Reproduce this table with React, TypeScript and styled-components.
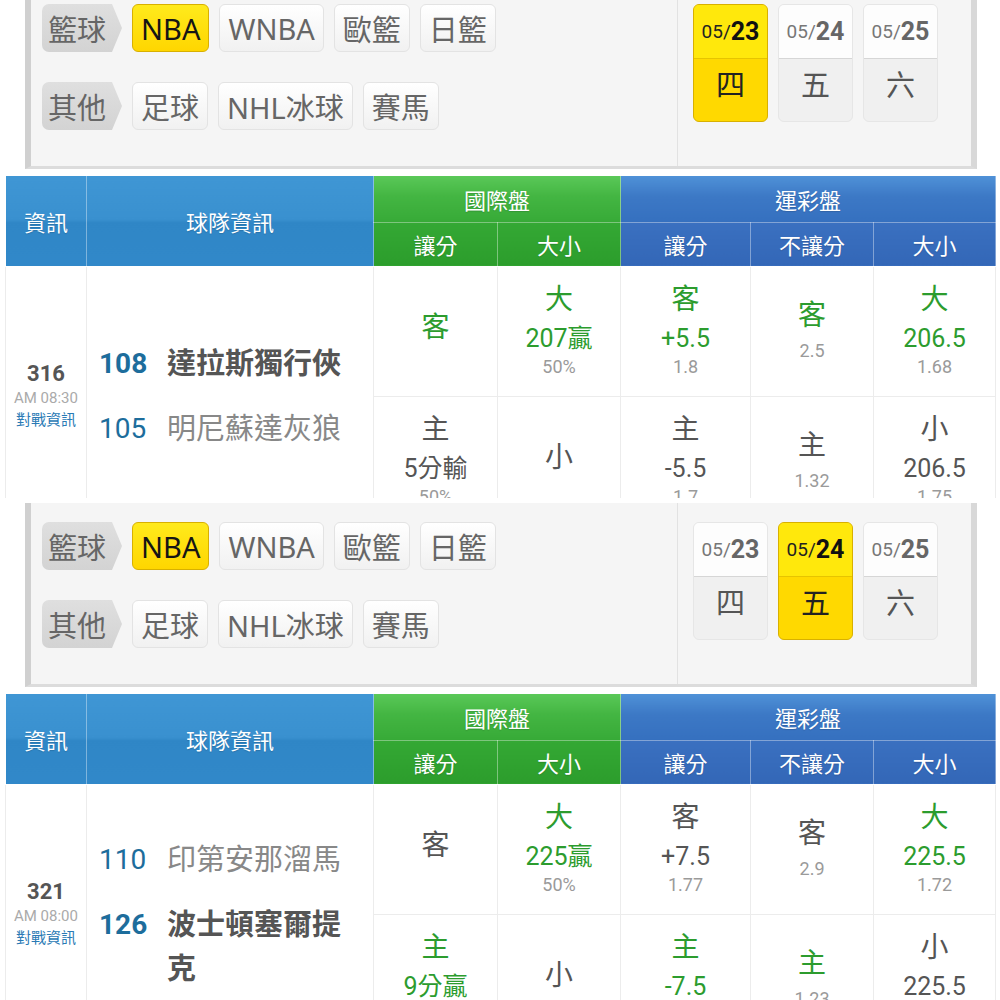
import styled, { createGlobalStyle } from "styled-components";

type Tone = "win" | "plain";
type Line = { text: string; kind: "mark" | "value" | "odds"; tone?: Tone };
type Team = { no: string; name: string; strong: boolean };
type Game = {
  id: string;
  time: string;
  teams: [Team, Team];
  rows: [Line[][], Line[][]];
};

const mk = (text: string, tone: Tone = "plain"): Line => ({ text, kind: "mark", tone });
const val = (text: string, tone: Tone = "plain"): Line => ({ text, kind: "value", tone });
const odd = (text: string): Line => ({ text, kind: "odds" });

const game316: Game = {
  id: "316",
  time: "AM 08:30",
  teams: [
    { no: "108", name: "達拉斯獨行俠", strong: true },
    { no: "105", name: "明尼蘇達灰狼", strong: false },
  ],
  rows: [
    [
      [mk("客", "win")],
      [mk("大", "win"), val("207贏", "win"), odd("50%")],
      [mk("客", "win"), val("+5.5", "win"), odd("1.8")],
      [mk("客", "win"), odd("2.5")],
      [mk("大", "win"), val("206.5", "win"), odd("1.68")],
    ],
    [
      [mk("主"), val("5分輸"), odd("50%")],
      [mk("小")],
      [mk("主"), val("-5.5"), odd("1.7")],
      [mk("主"), odd("1.32")],
      [mk("小"), val("206.5"), odd("1.75")],
    ],
  ],
};

const game321: Game = {
  id: "321",
  time: "AM 08:00",
  teams: [
    { no: "110", name: "印第安那溜馬", strong: false },
    { no: "126", name: "波士頓塞爾提克", strong: true },
  ],
  rows: [
    [
      [mk("客")],
      [mk("大", "win"), val("225贏", "win"), odd("50%")],
      [mk("客"), val("+7.5"), odd("1.77")],
      [mk("客"), odd("2.9")],
      [mk("大", "win"), val("225.5", "win"), odd("1.72")],
    ],
    [
      [mk("主", "win"), val("9分贏", "win"), odd("50%")],
      [mk("小")],
      [mk("主", "win"), val("-7.5", "win"), odd("1.73")],
      [mk("主", "win"), odd("1.23")],
      [mk("小"), val("225.5"), odd("1.72")],
    ],
  ],
};

const basketball = ["NBA", "WNBA", "歐籃", "日籃"];
const others = ["足球", "NHL冰球", "賽馬"];
const dates = [
  { day: "23", week: "四" },
  { day: "24", week: "五" },
  { day: "25", week: "六" },
];

const GlobalStyle = createGlobalStyle`
  * { box-sizing: border-box; }
  body {
    margin: 0;
    background: #fff;
    font-family: Roboto, "Noto Sans CJK TC", sans-serif;
  }
`;

const Page = styled.div`
  width: 1000px;
  display: flex;
  flex-direction: column;
  gap: 2px;
`;

const Screen = styled.div<{ $height: number }>`
  height: ${(p) => p.$height}px;
  overflow: hidden;
  background: #fff;
`;

const ScreenContent = styled.div<{ $scroll: number }>`
  margin-top: -${(p) => p.$scroll}px;
  padding-top: 3px;
`;

const FilterBox = styled.div`
  display: flex;
  height: 184px;
  margin: 0 23px 0 25px;
  background: #f5f5f5;
  border-left: 6px solid #d0d0d0;
  border-right: 6px solid #d8d8d8;
  border-bottom: 3px solid #dcdcdc;
`;

const SportArea = styled.div`
  width: 647px;
  display: flex;
  flex-direction: column;
  gap: 30px;
  padding: 19px 0 0 11px;
  border-right: 1px solid #e2e2e2;
`;

const SportRow = styled.div`
  display: flex;
  gap: 10px;
  align-items: center;
`;

const SportTag = styled.div`
  width: 80px;
  height: 48px;
  display: flex;
  align-items: center;
  padding-left: 6px;
  font-size: 29px;
  color: #666;
  background: linear-gradient(#dfdfdf, #d3d3d3);
  border-radius: 7px 0 0 7px;
  clip-path: polygon(0 0, 70px 0, 80px 50%, 70px 100%, 0 100%);
`;

const SportButton = styled.div<{ $active?: boolean }>`
  height: 48px;
  padding: 0 8px;
  display: flex;
  align-items: center;
  font-family: "Noto Sans", "Noto Sans CJK TC", sans-serif;
  font-size: 29px;
  border-radius: 6px;
  border: 1px solid ${(p) => (p.$active ? "#d8b000" : "#e3e3e3")};
  background: ${(p) =>
    p.$active ? "linear-gradient(#ffea1c, #ffd600)" : "linear-gradient(#ffffff, #f1f1f1)"};
  color: ${(p) => (p.$active ? "#151515" : "#666")};
`;

const DateArea = styled.div`
  display: flex;
  gap: 10px;
  padding: 19px 0 0 15px;
`;

const DateCard = styled.div<{ $active?: boolean }>`
  width: 75px;
  height: 118px;
  display: flex;
  flex-direction: column;
  border-radius: 6px;
  overflow: hidden;
  border: 1px solid ${(p) => (p.$active ? "#d8b000" : "#e6e6e6")};
  background: ${(p) => (p.$active ? "#ffd900" : "#f0f0f0")};
`;

const DateTop = styled.div<{ $active?: boolean }>`
  height: 54px;
  padding: 0 9px;
  display: flex;
  align-items: center;
  justify-content: center;
  background: ${(p) => (p.$active ? "#ffe80c" : "#fdfdfd")};
  border-bottom: 1px solid ${(p) => (p.$active ? "#e6c400" : "#d6d6d6")};
  color: ${(p) => (p.$active ? "#222" : "#777")};
  white-space: nowrap;
`;

const DateMonth = styled.span`
  font-size: 19px;
`;

const DateDay = styled.span<{ $active?: boolean }>`
  font-size: 25px;
  font-weight: 700;
  color: ${(p) => (p.$active ? "#111" : "#666")};
`;

const WeekDay = styled.div<{ $active?: boolean }>`
  flex: 1;
  display: flex;
  align-items: center;
  justify-content: center;
  padding-bottom: 14px;
  font-size: 29px;
  color: ${(p) => (p.$active ? "#222" : "#555")};
`;

const Board = styled.table`
  width: 990px;
  margin: 7px 5px 0;
  border-collapse: collapse;
  table-layout: fixed;
`;

type HeadTone = "info" | "intl" | "intlSub" | "lot" | "lotSub";

const headBg: Record<HeadTone, string> = {
  info: "linear-gradient(#3f96d4 0%, #3990cf 48%, #2f86c6 52%, #3188c9 100%)",
  intl: "linear-gradient(#5ac858 0%, #43b542 45%, #37aa37 100%)",
  intlSub: "linear-gradient(#34a834, #2c9d2c)",
  lot: "linear-gradient(#4f91d7 0%, #3c78c5 45%, #3570bf 100%)",
  lotSub: "linear-gradient(#3a70c0, #3367b7)",
};

const Head = styled.th<{ $tone: HeadTone; $h?: number }>`
  height: ${(p) => p.$h ?? 44}px;
  padding: 0;
  font-size: 22px;
  font-weight: 400;
  color: #fff;
  text-shadow: 0 1px 1px rgba(0, 0, 0, 0.15);
  background: ${(p) => headBg[p.$tone]};
  border: 1px solid rgba(255, 255, 255, 0.38);
  border-top: none;
`;

const Cell = styled.td`
  padding: 0;
  height: 130px;
  vertical-align: middle;
  border: 1px solid #ececec;
`;

const InfoStack = styled.div`
  display: flex;
  flex-direction: column;
  align-items: center;
`;

const GameNo = styled.div`
  font-size: 22px;
  font-weight: 700;
  line-height: 26px;
  color: #555;
`;

const GameTime = styled.div`
  font-size: 15px;
  line-height: 22px;
  color: #aaa;
`;

const VsLink = styled.div`
  font-size: 15px;
  line-height: 22px;
  color: #2a7ab5;
`;

const TeamStack = styled.div`
  display: flex;
  flex-direction: column;
  gap: 21px;
  padding-left: 12px;
`;

const TeamLine = styled.div`
  display: flex;
  align-items: flex-start;
  line-height: 44px;
`;

const TeamNo = styled.span<{ $strong: boolean }>`
  width: 57px;
  margin-right: 11px;
  font-size: 28px;
  font-weight: ${(p) => (p.$strong ? 700 : 400)};
  color: #1d6d9c;
`;

const TeamName = styled.span<{ $strong: boolean }>`
  width: 190px;
  font-size: 29px;
  font-weight: ${(p) => (p.$strong ? 700 : 400)};
  color: ${(p) => (p.$strong ? "#555" : "#888")};
`;

const OddsStack = styled.div`
  display: flex;
  flex-direction: column;
  align-items: center;
  padding-bottom: 6px;
`;

const lineStyle = {
  mark: "font-size: 28px; line-height: 46px;",
  value: "font-size: 25px; line-height: 32px;",
  odds: "font-size: 18px; line-height: 24px;",
};

const OddsLine = styled.div<{ $kind: Line["kind"]; $tone?: Tone }>`
  ${(p) => lineStyle[p.$kind]}
  color: ${(p) => (p.$kind === "odds" ? "#9a9a9a" : p.$tone === "win" ? "#2c9c2e" : "#555")};
`;

const OddsCell = ({ lines }: { lines: Line[] }) => (
  <Cell>
    <OddsStack>
      {lines.map((l, i) => (
        <OddsLine key={i} $kind={l.kind} $tone={l.tone}>
          {l.text}
        </OddsLine>
      ))}
    </OddsStack>
  </Cell>
);

const Filters = ({ day }: { day: number }) => (
  <FilterBox>
    <SportArea>
      <SportRow>
        <SportTag>籃球</SportTag>
        {basketball.map((s, i) => (
          <SportButton key={s} $active={i === 0}>
            {s}
          </SportButton>
        ))}
      </SportRow>
      <SportRow>
        <SportTag>其他</SportTag>
        {others.map((s) => (
          <SportButton key={s}>{s}</SportButton>
        ))}
      </SportRow>
    </SportArea>
    <DateArea>
      {dates.map((d, i) => (
        <DateCard key={d.day} $active={i === day}>
          <DateTop $active={i === day}>
            <DateMonth>05/</DateMonth>
            <DateDay $active={i === day}>{d.day}</DateDay>
          </DateTop>
          <WeekDay $active={i === day}>{d.week}</WeekDay>
        </DateCard>
      ))}
    </DateArea>
  </FilterBox>
);

const OddsBoard = ({ game }: { game: Game }) => (
  <Board>
    <colgroup>
      <col style={{ width: 81 }} />
      <col style={{ width: 287 }} />
      <col style={{ width: 124 }} />
      <col style={{ width: 123 }} />
      <col style={{ width: 130 }} />
      <col style={{ width: 123 }} />
      <col style={{ width: 122 }} />
    </colgroup>
    <thead>
      <tr>
        <Head $tone="info" rowSpan={2}>資訊</Head>
        <Head $tone="info" rowSpan={2}>球隊資訊</Head>
        <Head $tone="intl" colSpan={2} $h={46}>國際盤</Head>
        <Head $tone="lot" colSpan={3} $h={46}>運彩盤</Head>
      </tr>
      <tr>
        <Head $tone="intlSub">讓分</Head>
        <Head $tone="intlSub">大小</Head>
        <Head $tone="lotSub">讓分</Head>
        <Head $tone="lotSub">不讓分</Head>
        <Head $tone="lotSub">大小</Head>
      </tr>
    </thead>
    <tbody>
      <tr>
        <Cell rowSpan={2}>
          <InfoStack>
            <GameNo>{game.id}</GameNo>
            <GameTime>{game.time}</GameTime>
            <VsLink>對戰資訊</VsLink>
          </InfoStack>
        </Cell>
        <Cell rowSpan={2}>
          <TeamStack>
            {game.teams.map((t) => (
              <TeamLine key={t.no}>
                <TeamNo $strong={t.strong}>{t.no}</TeamNo>
                <TeamName $strong={t.strong}>{t.name}</TeamName>
              </TeamLine>
            ))}
          </TeamStack>
        </Cell>
        {game.rows[0].map((c, i) => (
          <OddsCell key={i} lines={c} />
        ))}
      </tr>
      <tr>
        {game.rows[1].map((c, i) => (
          <OddsCell key={i} lines={c} />
        ))}
      </tr>
    </tbody>
  </Board>
);

const App = () => (
  <>
    <GlobalStyle />
    <Page>
      <Screen $height={498}>
        <ScreenContent $scroll={18}>
          <Filters day={0} />
          <OddsBoard game={game316} />
        </ScreenContent>
      </Screen>
      <Screen $height={500}>
        <ScreenContent $scroll={0}>
          <Filters day={1} />
          <OddsBoard game={game321} />
        </ScreenContent>
      </Screen>
    </Page>
  </>
);

export default App;
